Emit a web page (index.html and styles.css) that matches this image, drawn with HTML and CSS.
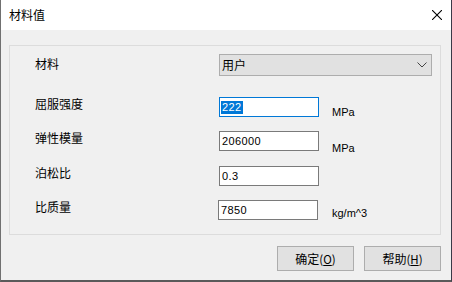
FILE: index.html
```html
<!DOCTYPE html>
<html lang="zh-CN">
<head>
<meta charset="utf-8">
<title>材料值</title>
<link rel="stylesheet" href="styles.css">
</head>
<body>
<div class="window">
  <div class="titlebar">
    <span class="title">材料值</span>
    <svg class="close" width="10" height="10" viewBox="0 0 10 10"><path d="M0 0L10 10M10 0L0 10" stroke="#000" stroke-width="1.1"/></svg>
  </div>
  <div class="content">
    <div class="group">
      <div class="row row-combo">
        <span class="label label-combo">材料</span>
        <div class="combo">
          <span class="combo-text">用户</span>
          <svg class="chevron" width="10" height="6" viewBox="0 0 10 6"><path d="M0.5 0.5L5 5L9.5 0.5" fill="none" stroke="#444" stroke-width="1"/></svg>
        </div>
      </div>
      <div class="row row-1">
        <span class="label">屈服强度</span>
        <div class="input input-focus"><span class="sel">222</span></div>
        <span class="unit unit-1">MPa</span>
      </div>
      <div class="row row-2">
        <span class="label">弹性模量</span>
        <div class="input">206000</div>
        <span class="unit unit-2">MPa</span>
      </div>
      <div class="row row-3">
        <span class="label">泊松比</span>
        <div class="input">0.3</div>
      </div>
      <div class="row row-4">
        <span class="label">比质量</span>
        <div class="input input-shift">7850</div>
        <span class="unit unit-3">kg/m^3</span>
      </div>
    </div>
    <div class="buttons">
      <div class="btn">确定<span class="mn">(<u>O</u>)</span></div>
      <div class="btn">帮助<span class="mn">(<u>H</u>)</span></div>
    </div>
  </div>
</div>
</body>
</html>
```

FILE: styles.css
```css
* { box-sizing: border-box; }
html, body { margin: 0; padding: 0; }
body {
  width: 452px;
  height: 282px;
  overflow: hidden;
  font-family: "Noto Sans CJK SC", "Noto Sans", sans-serif;
  font-size: 12px;
  color: #000;
  background: #f0f0f0;
}
.window {
  width: 452px;
  height: 282px;
  border-left: 1px solid #707070;
  border-right: 1px solid #3a3a48;
  border-bottom: 2px solid #5a5a5a;
  background: #f0f0f0;
  display: flex;
  flex-direction: column;
}
.titlebar {
  height: 30px;
  background: #fff;
  display: flex;
  align-items: center;
  justify-content: space-between;
  padding: 0 9px 0 8px;
}
.title {
  font-size: 12px;
  line-height: 16px;
  margin-top: -1px;
}
.close { display: block; }
.content {
  padding: 15px 10px 0 8px;
}
.group {
  width: 432px;
  height: 190px;
  border: 1px solid #dcdcdc;
  padding: 8px 0 0 25px;
}
.row {
  display: flex;
  align-items: flex-start;
  height: 20px;
}
.row-combo { height: 22px; }
.label {
  width: 184px;
  line-height: 16px;
  margin-top: -1px;
  flex: none;
}
.label-combo { margin-top: 2px; }
.row-1 { margin-top: 21px; }
.row-2 { margin-top: 14px; }
.row-3 { margin-top: 15px; }
.row-4 { margin-top: 14px; }
.combo {
  width: 213px;
  height: 22px;
  border: 1px solid #adadad;
  background: #e1e1e1;
  display: flex;
  align-items: center;
  justify-content: space-between;
  padding: 0 4px 0 2px;
}
.combo-text { line-height: 16px; }
.chevron { display: block; }
.input {
  width: 100px;
  height: 20px;
  border: 1px solid #7a7a7a;
  background: #fff;
  font-family: "Liberation Sans", Arial, sans-serif;
  font-size: 11px;
  letter-spacing: 0.4px;
  line-height: 18px;
  padding-left: 2px;
  flex: none;
}
.input-shift { margin-left: -1px; }
.input-focus { border-color: #0078d7; }
.sel {
  background: #0078d7;
  color: #fff;
  display: inline-block;
  line-height: 13px;
  padding: 0 1px;
  margin-left: -1px;
}
.unit {
  font-family: "Liberation Sans", Arial, sans-serif;
  font-size: 11px;
  line-height: 13px;
  margin-left: 13px;
  flex: none;
}
.unit-1 { margin-top: 9px; }
.unit-2 { margin-top: 11px; }
.unit-3 { margin-top: 7px; margin-left: 14px; }
.buttons {
  display: flex;
  justify-content: flex-end;
  gap: 10px;
  margin-top: 11px;
}
.btn {
  width: 77px;
  height: 25px;
  border: 1px solid #adadad;
  background: #e1e1e1;
  display: flex;
  align-items: center;
  justify-content: center;
  line-height: 16px;
}
.mn { font-size: 11.5px; }
```
